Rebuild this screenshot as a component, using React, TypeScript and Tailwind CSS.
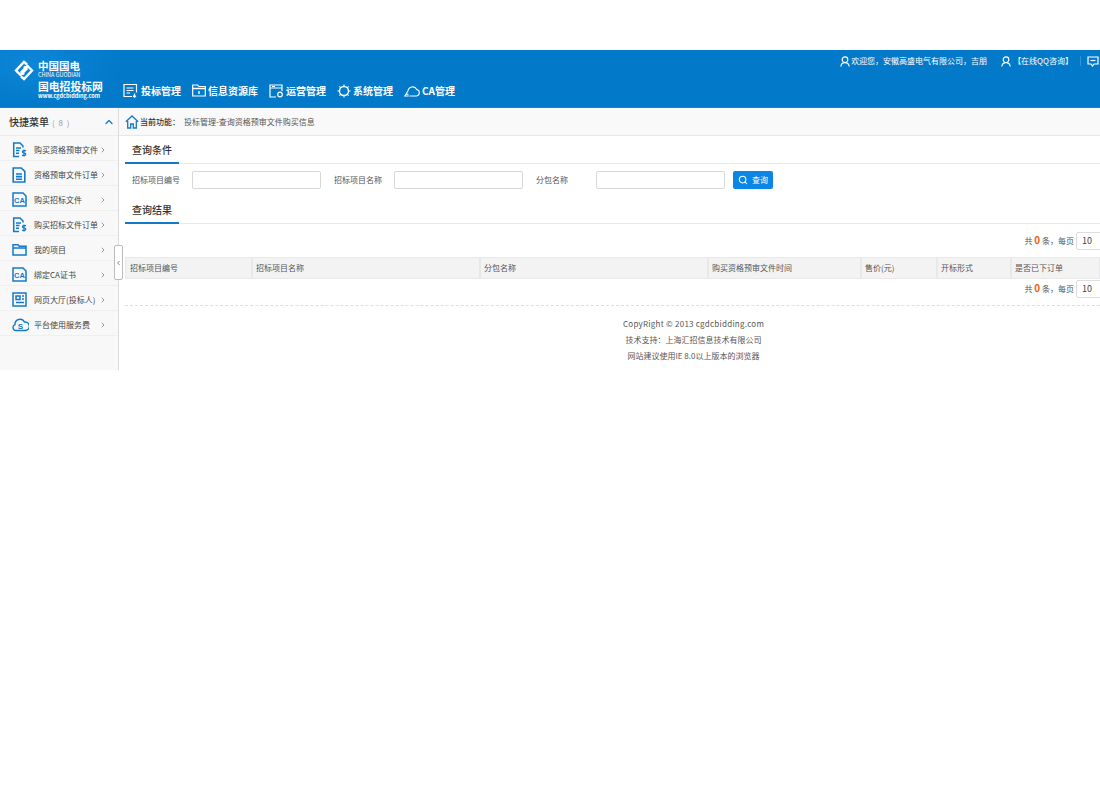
import { ChevronLeft, ChevronRight, ChevronUp, Search } from 'lucide-react';
import type { ReactNode } from 'react';

const blue = '#1279c9';

const IconDoc = ({ dollar }: { dollar?: boolean }) => (
  <svg width="15" height="16" viewBox="0 0 15 16" fill="none" stroke={blue} strokeWidth="1.5">
    <path d="M11 5.5V4L8 1H1.7v13.5H7" />
    <path d="M4 6h5M4 8.6h3.5M4 11.2h3" />
    {dollar ? <path d="M14 8.6h-2.4a1.1 1.1 0 0 0 0 2.4h1a1.1 1.1 0 0 1 0 2.4H10M12 7.600v7" strokeWidth="1.200" /> : null}
  </svg>
);

const IconOrder = () => (
  <svg width="14" height="16" viewBox="0 0 14 16" fill="none" stroke={blue} strokeWidth="1.600">
    <path d="M1.200 1h8l3.600 3.400V15H1.200z" />
    <path d="M4 7h6M4 9.600h6M4 12.200h6" />
  </svg>
);

const IconCa = () => (
  <svg width="15" height="15" viewBox="0 0 15 15">
    <path d="M1 1h10l3 3v10H1z" fill="none" stroke={blue} strokeWidth="1.500" />
    <text x="7.500" y="11" textAnchor="middle" fontSize="7.500" fontWeight="700" fill={blue} fontFamily="Liberation Sans, sans-serif">CA</text>
  </svg>
);

const IconFolder = () => (
  <svg width="15" height="13" viewBox="0 0 15 13" fill="none" stroke={blue} strokeWidth="1.500">
    <path d="M1 3V1.700h5l1.200 1.500H14V12H1z" />
    <path d="M1 5h13" />
  </svg>
);

const IconHall = () => (
  <svg width="15" height="15" viewBox="0 0 15 15" fill="none" stroke={blue} strokeWidth="1.500">
    <rect x="1" y="1" width="13" height="13" />
    <path d="M4 4h4v3.500H4zM10 4h2M10 7h2M4 10.500h8" />
  </svg>
);

const IconCloudS = () => (
  <svg width="17" height="15" viewBox="0 0 17 15" fill="none" stroke={blue} strokeWidth="1.400">
    <path d="M4.500 13.500H4a3 3 0 0 1-1-5.800 5 5 0 0 1 9.400-2.700 4.200 4.200 0 0 1 1.200 8.500z" />
    <text x="8.300" y="12" textAnchor="middle" fontSize="8" fontWeight="700" fill={blue} stroke="none" fontFamily="Liberation Sans, sans-serif">S</text>
  </svg>
);

const sideItems: { label: string; icon: ReactNode }[] = [
  { label: '购买资格预审文件', icon: <IconDoc dollar /> },
  { label: '资格预审文件订单', icon: <IconOrder /> },
  { label: '购买招标文件', icon: <IconCa /> },
  { label: '购买招标文件订单', icon: <IconDoc dollar /> },
  { label: '我的项目', icon: <IconFolder /> },
  { label: '绑定CA证书', icon: <IconCa /> },
  { label: '网页大厅(投标人)', icon: <IconHall /> },
  { label: '平台使用服务费', icon: <IconCloudS /> },
];

const navItems: { label: string; icon: ReactNode }[] = [
  {
    label: '投标管理',
    icon: (
      <svg width="16" height="15" viewBox="0 0 16 15" fill="none" stroke="#fff" strokeWidth="1.200">
        <path d="M9 13.500H1V1.500h12.500v8" />
        <path d="M3.500 5h7M3.500 7.500h7M3.500 10h3.500M11.500 10.500v3.500M10 12.800l1.500 1.400 1.500-1.400" />
      </svg>
    ),
  },
  {
    label: '信息资源库',
    icon: (
      <svg width="14" height="13" viewBox="0 0 14 13" fill="none" stroke="#fff" strokeWidth="1.200">
        <path d="M.7 3V1h5l1 1.500h6.600V12H.7z" />
        <path d="M.7 4.500h12.600M7 7v3" strokeWidth="1.400" />
      </svg>
    ),
  },
  {
    label: '运营管理',
    icon: (
      <svg width="15" height="14" viewBox="0 0 15 14" fill="none" stroke="#fff" strokeWidth="1.200">
        <path d="M7 13H1V1h12v6" />
        <path d="M1 4h12M3 2.500h3" />
        <circle cx="11" cy="10.500" r="2.300" />
      </svg>
    ),
  },
  {
    label: '系统管理',
    icon: (
      <svg width="14" height="14" viewBox="0 0 14 14" fill="none" stroke="#fff" strokeWidth="1.400">
        <circle cx="7" cy="7" r="4.500" />
        <path d="M7 .5v2M7 11.500v2M.5 7h2M11.500 7h2M2.400 2.400l1.400 1.400M10.200 10.200l1.400 1.400M2.400 11.600l1.400-1.400M10.200 3.800l1.400-1.400" strokeWidth="1.100" />
      </svg>
    ),
  },
  {
    label: 'CA管理',
    icon: (
      <svg width="16" height="13" viewBox="0 0 16 13" fill="none" stroke="#fff" strokeWidth="1.100">
        <path d="M4 7a4.600 4.600 0 0 1 8.700-1.500A3.300 3.300 0 0 1 12.500 12H5.500" />
        <path d="M4 7 .8 12h4M1.500 10.200h3" />
      </svg>
    ),
  },
];

const IconUser = () => (
  <svg width="10" height="11" viewBox="0 0 10 11" fill="none" stroke="#fff" strokeWidth="1.200">
    <circle cx="5" cy="3.700" r="2.800" />
    <path d="M.8 10.500c.4-2.400 2-3.800 4.200-3.800s3.800 1.400 4.200 3.800" />
  </svg>
);

const columns = ['招标项目编号', '招标项目名称', '分包名称', '购买资格预审文件时间', '售价(元)', '开标形式', '是否已下订单'];

const SectionTitle = ({ title }: { title: string }) => (
  <div className="flex h-7 border-b border-[#e8e8e8]">
    <div className="w-[54px] -mb-px h-7 border-b-2 border-[#1279c9] pl-[7px] text-[10px] font-medium leading-7 text-[#333]">
      {title}
    </div>
  </div>
);

const Pager = () => (
  <div className="-mr-[10px] flex items-center justify-end gap-[2px] text-[8px] text-[#555]">
    <span className="-mt-[1px] leading-none">
      共 <b className="text-[10px] leading-none text-[#f25c1a]">0</b> 条，每页
    </span>
    <div className="h-[18px] w-[34px] shrink-0 rounded-[2px] border border-[#ddd] bg-white pl-[5px] text-[9px] leading-[16px] text-[#444]">
      10
    </div>
  </div>
);

const Field = ({ label, labelWidth, width }: { label: string; labelWidth: string; width: string }) => (
  <>
    <span className={`${labelWidth} shrink-0 text-[8px] text-[#555]`}>{label}</span>
    <div className={`${width} h-[18px] shrink-0 rounded-[2px] border border-[#d8d8d8] bg-white`} />
  </>
);

export default function App() {
  return (
    <div className="h-[800px] w-[1100px] overflow-hidden bg-white pt-[50px] font-['Noto_Sans_CJK_SC','Liberation_Sans',sans-serif]">
      <header className="flex h-[58px] border-b border-[#0a86da] bg-[#0279c9] text-white">
        <div className="flex w-[123px] shrink-0 bg-[radial-gradient(ellipse_at_25%_25%,#0e86d8,transparent_70%)] pl-[14px] pt-[9px]">
          <svg width="20" height="21" viewBox="0 0 20 20" fill="none" stroke="#fff" strokeWidth="2.400" className="mt-[1px] shrink-0">
            <path d="M13 4 10 1.500 2 10l4.500 4.500 6-6L10 6" />
            <path d="M7 16l3 2.500 8-8.500-4.500-4.500-6 6L10 14" />
          </svg>
          <div className="ml-[4px] flex flex-col">
            <span className="text-[10.500px] font-bold leading-[13px]">中国国电</span>
            <span className="text-[5.500px] leading-[6px]">CHINA GUODIAN</span>
            <span className="mt-[1px] text-[10.800px] font-bold leading-[14px]">国电招投标网</span>
            <span className="text-[5.500px] font-bold leading-[6px]">www.cgdcbidding.com</span>
          </div>
        </div>
        <div className="flex min-w-0 flex-1 flex-col">
          <div className="flex h-[22px] items-center justify-end whitespace-nowrap text-[8px]">
            <IconUser />
            <span className="ml-[1px]">欢迎您，安徽高盛电气有限公司，吉朋</span>
            <span className="ml-[14px]"><IconUser /></span>
            <span className="ml-[2px]">【在线QQ咨询】</span>
            <span className="ml-[7px] h-[10px] w-px bg-[#2f93d6]" />
            <svg width="12" height="11" viewBox="0 0 12 11" fill="none" stroke="#fff" strokeWidth="1.200" className="ml-[6px] mr-[1px]">
              <path d="M1 1h10v7H7L5.500 10 4 8H1z" />
              <path d="M3.500 4.500h5" />
            </svg>
          </div>
          <nav className="mt-[10px] flex h-[17px] items-center">
            {navItems.map((item) => (
              <div key={item.label} className="mr-[11px] flex items-center gap-[2px] whitespace-nowrap text-[10px] font-bold">
                {item.icon}
                <span>{item.label}</span>
              </div>
            ))}
          </nav>
        </div>
      </header>

      <div className="relative flex h-[262px]">
        <aside className="w-[119px] shrink-0 border-r border-[#dcdcdc] bg-[#f8f8f8]">
          <div className="flex h-7 items-center justify-between border-b border-[#ececec] pl-[9px] pr-[3px]">
            <span className="text-[10px] font-medium text-[#333]">
              快捷菜单<span className="ml-[3px] text-[8px] font-normal tracking-[1px] text-[#999]">( 8 )</span>
            </span>
            <ChevronUp size={12} strokeWidth={2.500} color={blue} />
          </div>
          {sideItems.map((item) => (
            <div key={item.label} className="flex h-[25px] items-center border-b border-[#efefef] pl-[12px] pt-[3px]">
              <span className="flex w-[22px] shrink-0 items-center">{item.icon}</span>
              <span className="w-[65px] shrink-0 whitespace-nowrap text-[8px] text-[#444]">{item.label}</span>
              <ChevronRight size={8} color="#666" className="shrink-0" />
            </div>
          ))}
        </aside>

        <div className="absolute left-[114px] top-[137px] z-10 flex h-[35px] w-[9px] items-center justify-center rounded-[2px] border border-[#bbb] bg-white">
          <ChevronLeft size={8} strokeWidth={2.500} color="#555" />
        </div>

        <main className="min-w-0 flex-1 overflow-hidden">
          <div className="flex h-7 items-center border-b border-[#e8e8e8] bg-[#f9f9f9] pl-[6px] text-[8px]">
            <svg width="14" height="14" viewBox="0 0 14 14" fill="none" stroke={blue} strokeWidth="1.300">
              <path d="M.8 6.800 7 1l6.200 5.800" />
              <path d="M2.700 6v7h3V9h2.600v4h3V6" />
            </svg>
            <span className="ml-[1px] font-medium text-[#333]">当前功能：</span>
            <span className="ml-[4px] text-[#555]">投标管理-查询资格预审文件购买信息</span>
          </div>

          <div className="pl-[6px]">
            <SectionTitle title="查询条件" />
            <div className="flex h-[32px] items-center pl-[7px]">
              <Field label="招标项目编号" labelWidth="w-[60px]" width="w-[129px]" />
              <span className="w-[13px] shrink-0" />
              <Field label="招标项目名称" labelWidth="w-[60px]" width="w-[129px]" />
              <span className="w-[13px] shrink-0" />
              <Field label="分包名称" labelWidth="w-[60px]" width="w-[129px]" />
              <button className="ml-[8px] flex h-[18px] w-[40px] shrink-0 items-center justify-center gap-[4px] rounded-[2px] bg-[#0a86e6] text-[8px] text-white">
                <Search size={10} strokeWidth={2.500} />
                查询
              </button>
            </div>
            <SectionTitle title="查询结果" />
            <div className="flex h-[33px] items-center justify-end">
              <Pager />
            </div>
            <div className="grid h-[22px] w-[975px] grid-cols-[127px_228px_228px_153px_76px_74px_89px] border border-[#e8e8e8] bg-[#f3f3f3]">
              {columns.map((col) => (
                <div key={col} className="flex items-center border-r-2 border-[#e8e8e8] pl-[3px] text-[8px] text-[#555] first:pl-[4px] last:border-r-0">
                  {col}
                </div>
              ))}
            </div>
            <div className="flex h-[19px] items-center justify-end">
              <Pager />
            </div>
            <div className="mt-[7px] border-t border-dashed border-[#dedede]" />
            <footer className="flex flex-col items-center pl-[162px] pt-[10px] text-[8px] leading-[16px] text-[#555]">
              <span className="tracking-[0.26px]">CopyRight © 2013 cgdcbidding.com</span>
              <span>技术支持：上海汇招信息技术有限公司</span>
              <span>网站建议使用IE 8.0以上版本的浏览器</span>
            </footer>
          </div>
        </main>
      </div>
    </div>
  );
}
